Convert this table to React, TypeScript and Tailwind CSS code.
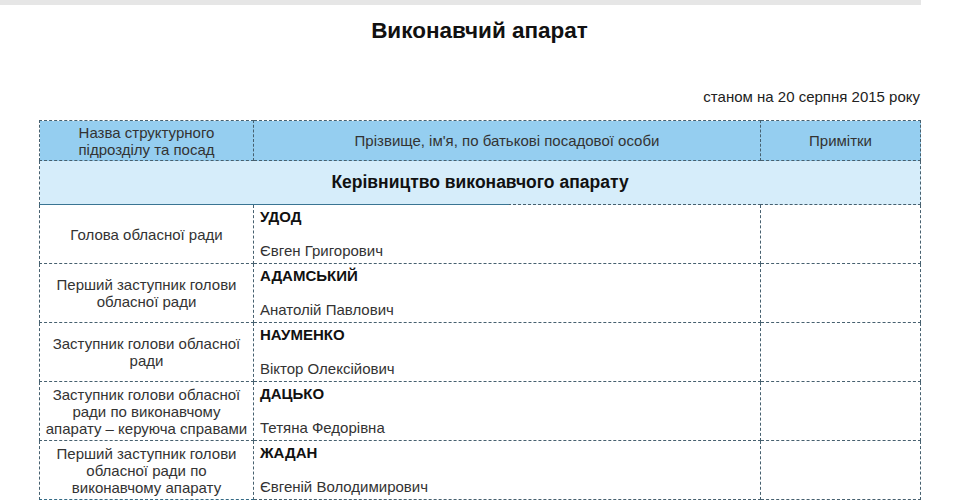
import React from "react";

const rows: { pos: React.ReactNode; last: string; first: string }[] = [
  { pos: "Голова обласної ради", last: "УДОД", first: "Євген Григорович" },
  { pos: "Перший заступник голови обласної ради", last: "АДАМСЬКИЙ", first: "Анатолій Павлович" },
  { pos: "Заступник голови обласної ради", last: "НАУМЕНКО", first: "Віктор Олексійович" },
  {
    pos: (
      <>
        Заступник голови обласної
        <br />
        ради по виконавчому
        <br />
        апарату – керуюча справами
      </>
    ),
    last: "ДАЦЬКО",
    first: "Тетяна Федорівна",
  },
  {
    pos: (
      <>
        Перший заступник голови
        <br />
        обласної ради по
        <br />
        виконавчому апарату
      </>
    ),
    last: "ЖАДАН",
    first: "Євгеній Володимирович",
  },
];

export default function App() {
  const cell = "border border-dashed border-[#46606f]";
  return (
    <div className="w-[968px] h-[500px] overflow-hidden bg-white text-[#222] font-['Liberation_Sans',Arial,sans-serif]">
      <div className="w-[921px] h-[5px] bg-[#e6e6e6]" />
      <div className="w-[960px] pl-[39px] pr-[40px]">
        <h1 className="text-center text-[22.5px] font-bold leading-[26px] mt-[13px] text-[#111]">Виконавчий апарат</h1>
        <div className="text-right text-[15px] leading-[17px] mt-[44px]">станом на 20 серпня 2015 року</div>
        <table className="mt-[15px] w-[881px] border-collapse table-fixed text-[15px] leading-[17px]">
          <colgroup>
            <col className="w-[214px]" />
            <col className="w-[507px]" />
            <col className="w-[160px]" />
          </colgroup>
          <thead>
            <tr className="h-[40px] bg-[#95cef0] text-[#333]">
              <td className={`${cell} text-center px-[20px]`}>Назва структурного підрозділу та посад</td>
              <td className={`${cell} text-center`}>Прізвище, ім'я, по батькові посадової особи</td>
              <td className={`${cell} text-center`}>Примітки</td>
            </tr>
          </thead>
          <tbody>
            <tr className="h-[44px] bg-[#d6edfa]">
              <td colSpan={3} className="border border-dashed border-[#46606f] text-center font-bold text-[17.5px] text-[#111] p-0">
                <div className="relative h-[43px] flex items-center justify-center">
                  Керівництво виконавчого апарату
                  <div className="absolute left-[-1px] bottom-[-1px] w-[470px] h-[1px] bg-[#3a7593]" />
                </div>
              </td>
            </tr>
            {rows.map((r, i) => (
              <tr key={i} className="h-[59px]">
                <td className={`${cell} text-center text-[#333] px-[1px] whitespace-nowrap ${i === rows.length - 1 ? "border-b-solid border-b-[#336a85]" : ""}`}>
                  <div className={i < 3 ? "whitespace-normal" : ""}>{r.pos}</div>
                </td>
                <td className={`${cell} align-top px-[6px] p-0`}>
                  <div className="h-[58px] flex flex-col justify-between pt-[3px] pb-[4px]">
                    <div className="font-bold text-[#111]">{r.last}</div>
                    <div className="text-[#333]">{r.first}</div>
                  </div>
                </td>
                <td className={cell}></td>
              </tr>
            ))}
          </tbody>
        </table>
      </div>
    </div>
  );
}
